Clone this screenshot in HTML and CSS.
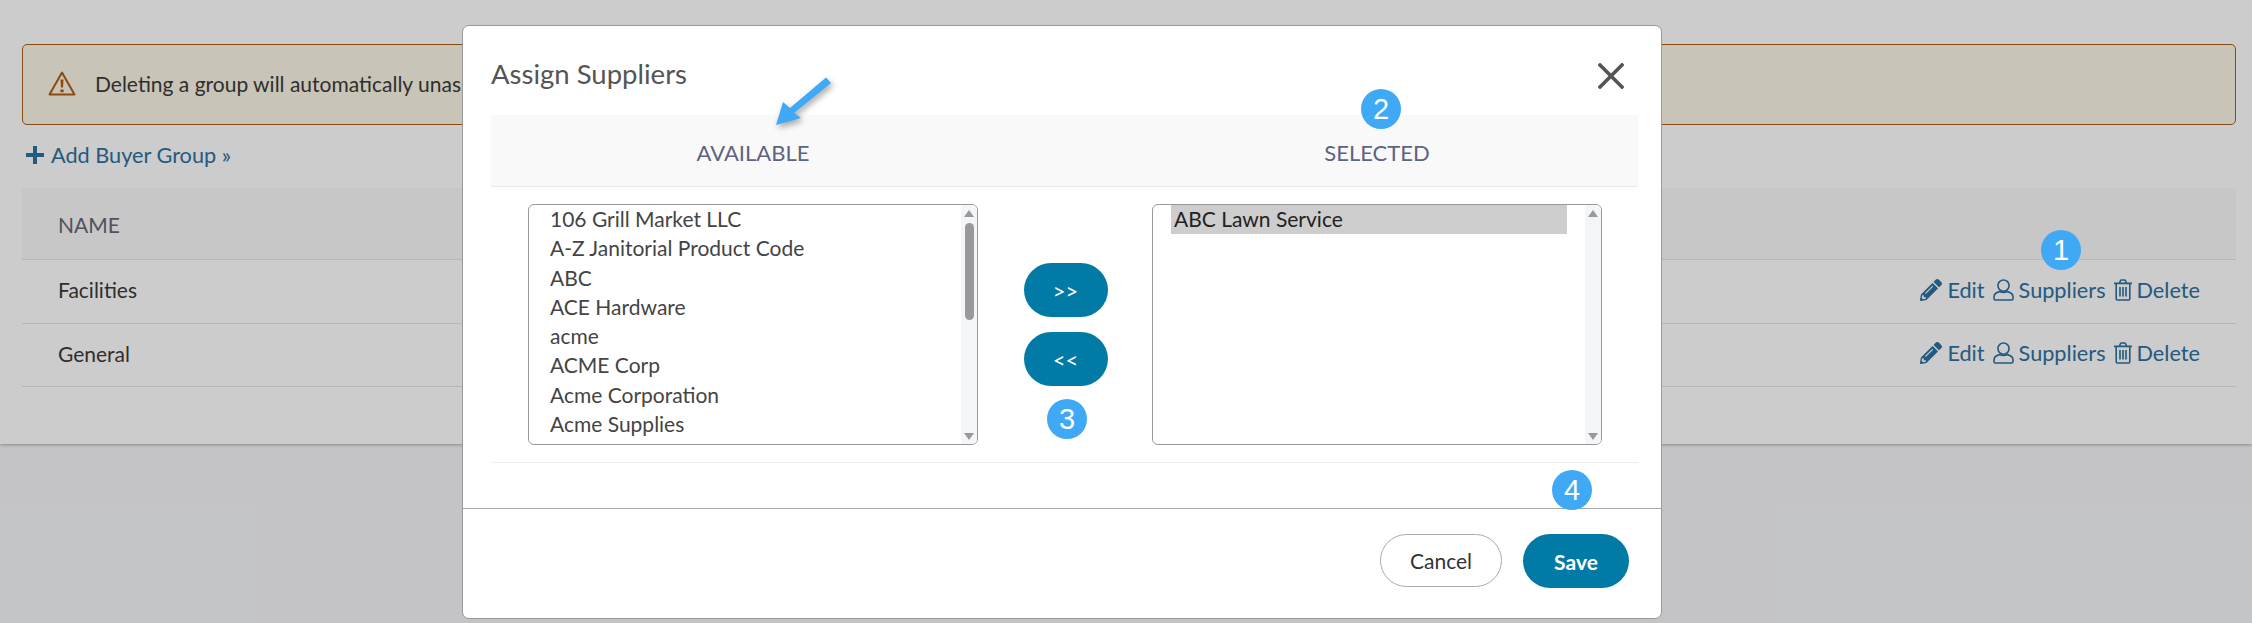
FILE: index.html
```html
<!DOCTYPE html>
<html lang="en">
<head>
<meta charset="utf-8">
<title>Assign Suppliers</title>
<link rel="stylesheet" href="styles.css">
</head>
<body>
<svg width="0" height="0" class="defs">
  <symbol id="i-pencil" viewBox="0 0 512 512"><path d="M497.9 142.1l-46.1 46.1c-4.7 4.7-12.3 4.7-17 0l-111-111c-4.7-4.7-4.7-12.3 0-17l46.1-46.1c18.7-18.7 49.1-18.7 67.9 0l60.1 60.1c18.8 18.7 18.8 49.1 0 67.9zM284.2 99.8L21.6 362.4.4 483.9c-2.9 16.4 11.4 30.6 27.8 27.8l121.5-21.3 262.6-262.6c4.7-4.7 4.7-12.3 0-17l-111-111c-4.8-4.7-12.4-4.7-17.1 0zM124.1 339.9c-5.5-5.5-5.5-14.3 0-19.8l154-154c5.5-5.5 14.3-5.5 19.8 0s5.5 14.3 0 19.8l-154 154c-5.5 5.5-14.3 5.5-19.8 0zM88 424h48v36.3l-64.5 11.3-31.1-31.1L51.7 376H88v48z" fill="currentColor"/></symbol>
  <symbol id="i-user" viewBox="0 0 21 22"><g fill="none" stroke="currentColor" stroke-width="1.6"><ellipse cx="10.5" cy="6.6" rx="5.6" ry="5.6"/><path d="M6.5 12.6C3 13.4 1 15 1 18v1.6c0 .8.6 1.4 1.4 1.4h16.2c.8 0 1.4-.6 1.4-1.4V18c0-3-2-4.6-5.5-5.4-2.6 1.2-5.4 1.2-8 0z"/></g></symbol>
  <symbol id="i-trash" viewBox="0 0 18 22"><g fill="none" stroke="currentColor" stroke-width="1.6"><path d="M0 4.4h18M5.4 4.2l1-2.4c.2-.5.6-.8 1.2-.8h2.8c.6 0 1 .3 1.2.8l1 2.4M2.2 4.6v15.2c0 .7.5 1.2 1.2 1.2h11.2c.7 0 1.200-.5 1.200-1.200V4.600M6 8v9.500M9 8v9.500M12 8v9.500"/></g></symbol>
</svg>

<main class="panel">
  <div class="alert">
    <svg class="alert-icon" viewBox="0 0 28 25"><path d="M14 1.500 1.500 23.500h25z" fill="none" stroke="currentColor" stroke-width="2" stroke-linejoin="round"/><path d="M12.500 8.500h3l-.5 8h-2zM12.400 18.400h3.200v2.800h-3.200z" fill="currentColor"/></svg>
    <span>Deleting a group will automatically unassign it from users.</span>
  </div>
  <a class="add-link">
    <svg class="plus" viewBox="0 0 18 18"><path d="M7 0h4v7h7v4h-7v7H7v-7H0V7h7z" fill="currentColor"/></svg>
    <span>Add Buyer Group »</span>
  </a>
  <div class="table">
    <div class="thead">NAME</div>
    <div class="row">
      <span>Facilities</span>
      <div class="actions">
        <a class="action"><svg class="ic-pencil"><use href="#i-pencil"/></svg>Edit</a>
        <a class="action"><svg class="ic-user"><use href="#i-user"/></svg>Suppliers</a>
        <a class="action"><svg class="ic-trash"><use href="#i-trash"/></svg>Delete</a>
      </div>
    </div>
    <div class="row">
      <span>General</span>
      <div class="actions">
        <a class="action"><svg class="ic-pencil"><use href="#i-pencil"/></svg>Edit</a>
        <a class="action"><svg class="ic-user"><use href="#i-user"/></svg>Suppliers</a>
        <a class="action"><svg class="ic-trash"><use href="#i-trash"/></svg>Delete</a>
      </div>
    </div>
  </div>
</main>

<div class="backdrop"></div>

<section class="modal">
  <header class="modal-head">
    <h2>Assign Suppliers</h2>
    <svg class="close" viewBox="0 0 26 26"><path d="M2 2l22 22M24 2 2 24" stroke="currentColor" stroke-width="3.600" stroke-linecap="square" fill="none"/></svg>
  </header>
  <div class="modal-body">
    <div class="cols band">
      <div class="label">AVAILABLE</div>
      <div></div>
      <div class="label">SELECTED</div>
    </div>
    <div class="cols picker">
      <div class="listbox">
        <ul class="items">
          <li>106 Grill Market LLC</li>
          <li>A-Z Janitorial Product Code</li>
          <li>ABC</li>
          <li>ACE Hardware</li>
          <li>acme</li>
          <li>ACME Corp</li>
          <li>Acme Corporation</li>
          <li>Acme Supplies</li>
        </ul>
        <div class="scroll"><i class="up"></i><b class="thumb"></b><i class="down"></i></div>
      </div>
      <div class="movers">
        <button class="btn primary mover">&gt;&gt;</button>
        <button class="btn primary mover">&lt;&lt;</button>
      </div>
      <div class="listbox">
        <ul class="items">
          <li class="sel">ABC Lawn Service</li>
        </ul>
        <div class="scroll"><i class="up"></i><i class="down"></i></div>
      </div>
    </div>
  </div>
  <footer class="modal-foot">
    <button class="btn cancel">Cancel</button>
    <button class="btn primary save">Save</button>
  </footer>
</section>

<svg class="arrow" viewBox="0 0 70 60"><path d="M53 1.500 58 7 21 37 28 42 3 49 10 26 17 32z" fill="#3fa9f5"/></svg>
<div class="badge b1">1</div>
<div class="badge b2">2</div>
<div class="badge b3">3</div>
<div class="badge b4">4</div>
</body>
</html>
```
FILE: styles.css
```css
* { box-sizing: border-box; }
html, body { margin: 0; height: 623px; overflow: hidden; }
body {
  position: relative;
  background: #f5f6f9;
  font-family: "Lato", "Noto Sans", sans-serif;
  font-size: 21px;
  color: #3a3a3a;
}
.defs { position: absolute; }

.panel {
  height: 444px;
  padding: 44px 16px 0 22px;
  background: #fff;
  box-shadow: 0 1px 3px rgba(0,0,0,.3);
}
.alert {
  display: flex;
  align-items: center;
  gap: 19px;
  height: 81px;
  padding: 0 0 3px 25px;
  background: #fbf6e6;
  border: 1px solid #ad5e14;
  border-radius: 5px;
}
.alert-icon { width: 28px; height: 25px; color: #ad5e14; }
.add-link {
  display: flex;
  align-items: center;
  gap: 7px;
  height: 22px;
  margin: 19px 0 0 4px;
  color: #2d70a0;
  font-size: 21.700px;
}
.plus { width: 18px; height: 18px; }
.table { margin-top: 22px; }
.thead {
  display: flex;
  align-items: center;
  height: 72px;
  padding: 2px 36px 0;
  background: #f9f9f9;
  border-bottom: 1px solid #e4e4e4;
  color: #667;
  font-size: 21px;
}
.row {
  display: flex;
  align-items: center;
  justify-content: space-between;
  height: 64px;
  padding: 0 36px 4px;
  border-bottom: 1px solid #e4e4e4;
}
.row:last-child { height: 63px; }
.actions { display: flex; gap: 8px; color: #2d70a0; font-size: 21.700px; }
.action { display: flex; align-items: center; gap: 5px; }
.ic-pencil { width: 22px; height: 22px; }
.ic-user { width: 21px; height: 22px; }
.ic-trash { width: 18px; height: 22px; }

.backdrop {
  position: absolute;
  inset: 0;
  background: rgba(0,0,0,.2);
}

.modal {
  position: absolute;
  left: 462px;
  top: 25px;
  width: 1200px;
  height: 594px;
  display: flex;
  flex-direction: column;
  background: #fff;
  border: 1px solid #999;
  border-radius: 7px;
}
.modal-head {
  display: flex;
  align-items: center;
  justify-content: space-between;
  height: 89px;
  padding: 6px 37px 0 28px;
}
.modal-head h2 { margin: 0; font-size: 27.500px; font-weight: 400; color: #555; }
.close { margin-top: 4px; width: 26px; height: 26px; color: #555; }
.modal-body { margin: 0 23px 0 28px; height: 348px; border-bottom: 1px solid #eee; }
.cols { display: grid; grid-template-columns: 524px 101px 522px; }
.band {
  height: 72px;
  background: #f9f9f9;
  border-bottom: 1px solid #e9e9e9;
}
.label {
  padding-top: 24px;
  text-align: center;
  color: #5d6481;
  font-size: 22px;
}
.picker { padding-top: 17px; }
.listbox {
  display: flex;
  justify-self: center;
  width: 450px;
  height: 241px;
  background: #fff;
  border: 1px solid #999;
  border-radius: 6px;
  overflow: hidden;
}
.items { flex: 1; margin: 0; padding: 0 18px; list-style: none; }
.items li {
  height: 29.300px;
  padding-left: 3px;
  line-height: 27px;
  font-size: 21px;
  color: #444;
  white-space: nowrap;
}
.items li.sel { background: #cdcdcd; color: #222; }
.scroll {
  position: relative;
  display: flex;
  flex-direction: column;
  align-items: center;
  justify-content: space-between;
  width: 16px;
  padding: 5px 0 4px;
  background: #f4f5f9;
}
.up { width: 0; height: 0; border: 5px solid transparent; border-top: 0; border-bottom: 7px solid #999; }
.down { width: 0; height: 0; border: 5px solid transparent; border-bottom: 0; border-top: 7px solid #999; }
.thumb { position: absolute; top: 18px; width: 9px; height: 97px; border-radius: 5px; background: #999; }
.movers {
  display: flex;
  flex-direction: column;
  align-items: center;
  gap: 15px;
  padding-top: 59px;
}
.btn {
  font-family: inherit;
  font-size: 21px;
  border-radius: 27px;
  cursor: pointer;
}
.primary { background: #017ba6; border: 0; color: #fff; font-weight: 700; }
.mover { width: 84px; height: 54px; font-size: 22px; font-weight: 400; }
.modal-foot {
  display: flex;
  justify-content: flex-end;
  align-items: flex-start;
  gap: 21px;
  flex: 1;
  margin-top: 45px;
  padding: 25px 32px 0 0;
  border-top: 1px solid #aaa;
}
.cancel { width: 122px; height: 53px; background: #fff; border: 1px solid #aaa; color: #333; }
.save { width: 106px; height: 54px; }

.arrow {
  position: absolute;
  left: 773px;
  top: 76px;
  width: 70px;
  height: 60px;
  filter: drop-shadow(2px 3px 3px rgba(0,0,0,.35));
}
.badge {
  position: absolute;
  display: flex;
  align-items: center;
  justify-content: center;
  width: 40px;
  height: 40px;
  border-radius: 50%;
  background: #3fa9f5;
  color: #fff;
  font-family: "Liberation Sans", sans-serif;
  font-size: 29px;
}
.b1 { left: 2041px; top: 230px; }
.b2 { left: 1361px; top: 89px; }
.b3 { left: 1047px; top: 399px; }
.b4 { left: 1552px; top: 470px; }
```
